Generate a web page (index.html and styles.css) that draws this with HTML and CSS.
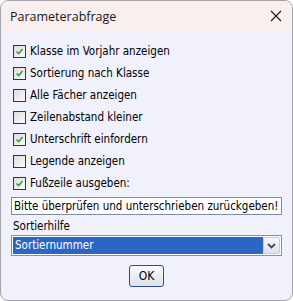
FILE: index.html
```html
<!DOCTYPE html>
<html lang="de">
<head>
	<meta charset="UTF-8">
	<title>Parameterabfrage</title>
	<link rel="stylesheet" href="styles.css">
</head>
<body>
    <div class="win">
        <div class="titlebar">
            <span class="title">Parameterabfrage</span>
            <svg class="close" width="12" height="12" viewBox="0 0 12 12">
                <path d="M1 1 L11 11 M11 1 L1 11" stroke="#1a1a1a" stroke-width="1.1" fill="none"/>
            </svg>
        </div>
        <div class="content">
            <ul class="opts">
                <li><span class="box on"><svg viewBox="0 0 13 13"><path d="M3 6.5 L5.5 9 L10 3.5" stroke="#2aa42a" stroke-width="1.8" fill="none"/></svg></span>Klasse im Vorjahr anzeigen</li>
                <li><span class="box on"><svg viewBox="0 0 13 13"><path d="M3 6.5 L5.5 9 L10 3.5" stroke="#2aa42a" stroke-width="1.8" fill="none"/></svg></span>Sortierung nach Klasse</li>
                <li><span class="box"></span>Alle Fächer anzeigen</li>
                <li><span class="box"></span>Zeilenabstand kleiner</li>
                <li><span class="box on"><svg viewBox="0 0 13 13"><path d="M3 6.5 L5.5 9 L10 3.5" stroke="#2aa42a" stroke-width="1.8" fill="none"/></svg></span>Unterschrift einfordern</li>
                <li><span class="box"></span>Legende anzeigen</li>
                <li><span class="box on"><svg viewBox="0 0 13 13"><path d="M3 6.5 L5.5 9 L10 3.5" stroke="#2aa42a" stroke-width="1.8" fill="none"/></svg></span>Fußzeile ausgeben:</li>
            </ul>
            <div class="field">Bitte überprüfen und unterschrieben zurückgeben!</div>
            <div class="label">Sortierhilfe</div>
            <div class="combo">
                <span class="combo-text">Sortiernummer</span>
                <span class="combo-btn">
                    <svg width="9" height="6" viewBox="0 0 9 6"><path d="M1 1 L4.5 4.5 L8 1" stroke="#3c4a64" stroke-width="1.8" fill="none"/></svg>
                </span>
            </div>
            <div class="actions">
                <span class="btn">OK</span>
            </div>
        </div>
    </div>
</body>
</html>
```

FILE: styles.css
```css
        body {
        	margin: 0;
        	background: #fff;
        }
        .win {
        	box-sizing: border-box;
        	width: 293px;
        	height: 301px;
        	border: 1px solid #a4a4a8;
        	border-radius: 8px;
        	background: #f1f1fb;
        	overflow: hidden;
        	font-family: "DejaVu Sans Condensed", "DejaVu Sans", Verdana, sans-serif;
        	font-stretch: condensed;
        	font-size: 11.5px;
        	color: #000;
        }
        .titlebar {
        	display: flex;
        	align-items: center;
        	justify-content: space-between;
        	height: 30px;
        	padding: 0 10px 0 9px;
        	background: #f8efee;
        }
        .title {
        	font-family: "Open Sans", "Noto Sans", sans-serif;
        	font-stretch: normal;
        	font-size: 12.5px;
        	color: #1a1a1a;
        }
        .content {
        	padding: 9px 10px 0 10px;
        }
        .opts {
        	list-style: none;
        	margin: 0;
        	padding: 0;
        }
        .opts li {
        	display: flex;
        	align-items: center;
        	height: 22px;
        }
        .box {
        	box-sizing: border-box;
        	width: 13px;
        	height: 13px;
        	margin: 0 4px 0 2px;
        	border: 1px solid #1c3b70;
        	background: linear-gradient(135deg, #dcdce0, #fbfbfb);
        }
        .box svg {
        	display: block;
        	width: 11px;
        	height: 11px;
        }
        .field {
        	box-sizing: border-box;
        	height: 18px;
        	margin-top: 3px;
        	padding: 0 2px;
        	line-height: 16px;
        	border: 1px solid #7d8aa8;
        	background: #fff;
        	white-space: nowrap;
        	overflow: hidden;
        }
        .label {
        	margin-top: 3px;
        	line-height: 16px;
        	padding-left: 2px;
        }
        .combo {
        	box-sizing: border-box;
        	display: flex;
        	height: 21px;
        	margin-top: 1px;
        	border: 1px solid #7b8ebd;
        	background: #fff;
        	padding: 1px;
        }
        .combo-text {
        	flex: 1;
        	padding-left: 2px;
        	line-height: 17px;
        	color: #fff;
        	background: #2b66c4;
        }
        .combo-btn {
        	box-sizing: border-box;
        	display: flex;
        	align-items: center;
        	justify-content: center;
        	width: 17px;
        	border: 1px solid #c4cde2;
        	border-radius: 2px;
        	background: linear-gradient(#f6f7fb, #dde2ef);
        }
        .actions {
        	display: flex;
        	justify-content: center;
        	margin-top: 9px;
        }
        .btn {
        	box-sizing: border-box;
        	width: 35px;
        	height: 22px;
        	line-height: 20px;
        	text-align: center;
        	border: 1px solid #2c4f86;
        	border-radius: 3px;
        	background: linear-gradient(#fbfbfd, #dde1ec);
        	font-size: 12px;
        }
```
